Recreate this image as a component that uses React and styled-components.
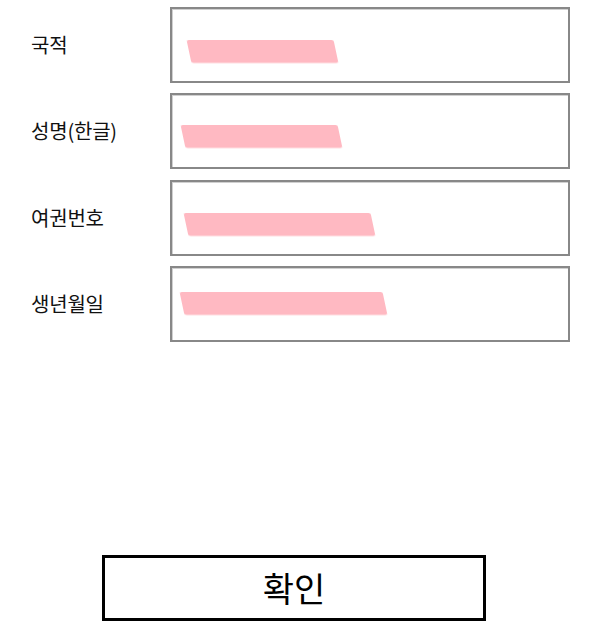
import React from "react";
import styled, { createGlobalStyle } from "styled-components";

const Global = createGlobalStyle`
  html, body { margin: 0; padding: 0; background: #fff; }
  body { font-family: "Noto Sans CJK KR", "Noto Sans", sans-serif; color: #111; }
`;

const Page = styled.div`
  width: 600px;
  height: 636px;
  padding-top: 7px;
  box-sizing: border-box;
  display: flex;
  flex-direction: column;
`;

const Form = styled.div`
  display: grid;
  grid-template-columns: 170px 400px;
  row-gap: 10.3px;
`;

const Label = styled.div`
  padding-left: 31px;
  font-size: 20px;
  line-height: 1;
  display: flex;
  align-items: center;
  letter-spacing: -0.2px;
`;

const Field = styled.div`
  height: 76px;
  box-sizing: border-box;
  border: 2px solid #888;
  box-shadow: inset 1px 1px 0 #d0d0d0;
  background: #fff;
  display: flex;
  align-items: flex-start;
`;

const Mask = styled.div`
  margin-left: ${(p) => p.$x}px;
  margin-top: ${(p) => p.$y}px;
  width: ${(p) => p.$w}px;
  height: 23px;
  background: #ffb9c2;
  border-radius: 2px;
  transform: skewX(12deg);
  filter: blur(0.5px);
`;

const Submit = styled.button`
  margin: 213px 0 0 102px;
  width: 384px;
  height: 66px;
  box-sizing: border-box;
  border: 3px solid #000;
  background: #fff;
  font-family: "Noto Sans CJK KR", "Noto Sans", sans-serif;
  font-size: 34px;
  color: #000;
  display: flex;
  align-items: center;
  justify-content: center;
  padding: 0;
  cursor: pointer;
`;

const rows = [
  { label: "국적", x: 16.5, y: 31, w: 147 },
  { label: "성명(한글)", x: 10.5, y: 30, w: 157 },
  { label: "여권번호", x: 13.5, y: 31, w: 187 },
  { label: "생년월일", x: 9.5, y: 24, w: 203 },
];

export default function App() {
  return (
    <>
      <Global />
      <Page>
        <Form>
          {rows.map((r) => (
            <React.Fragment key={r.label}>
              <Label>{r.label}</Label>
              <Field>
                <Mask $x={r.x} $y={r.y} $w={r.w} />
              </Field>
            </React.Fragment>
          ))}
        </Form>
        <Submit>확인</Submit>
      </Page>
    </>
  );
}
